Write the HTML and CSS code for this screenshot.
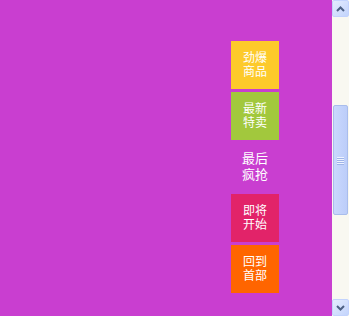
FILE: index.html
```html
<!DOCTYPE html>
<html lang="zh-CN">
<head>
<meta charset="utf-8">
<title>侧边栏</title>
<link rel="stylesheet" href="styles.css">
</head>
<body>
<div class="page">
  <main class="content">
    <nav class="sidebar">
      <a class="tile tile-hot" href="#">劲爆<br>商品</a>
      <a class="tile tile-new" href="#">最新<br>特卖</a>
      <a class="tile tile-last" href="#">最后<br>疯抢</a>
      <a class="tile tile-soon" href="#">即将<br>开始</a>
      <a class="tile tile-top" href="#">回到<br>首部</a>
    </nav>
  </main>
  <div class="scrollbar">
    <div class="sb-btn">
      <svg width="9" height="6" viewBox="0 0 9 6"><path d="M1 5 L4.5 1.5 L8 5" fill="none" stroke="#4d6185" stroke-width="2"/></svg>
    </div>
    <div class="sb-track">
      <div class="sb-gap-top"></div>
      <div class="sb-thumb">
        <span class="grip"></span><span class="grip"></span><span class="grip"></span><span class="grip"></span>
      </div>
      <div class="sb-gap-bottom"></div>
    </div>
    <div class="sb-btn">
      <svg width="9" height="6" viewBox="0 0 9 6"><path d="M1 1 L4.5 4.5 L8 1" fill="none" stroke="#4d6185" stroke-width="2"/></svg>
    </div>
  </div>
</div>
</body>
</html>
```

FILE: styles.css
```css
html, body {
  margin: 0;
  padding: 0;
  height: 100%;
}
body {
  font-family: "Liberation Sans", "Noto Sans CJK SC", sans-serif;
  background: #c93ed0;
}
.page {
  display: flex;
  height: 316px;
  overflow: hidden;
}
.content {
  flex: 1;
  background: #c93ed0;
}
.sidebar {
  display: flex;
  flex-direction: column;
  gap: 3px;
  width: 48px;
  margin-left: 231px;
  margin-top: 41px;
}
.tile {
  display: flex;
  align-items: center;
  justify-content: center;
  text-align: center;
  width: 48px;
  height: 48px;
  color: #fff;
  text-decoration: none;
  font-size: 12px;
  line-height: 14px;
}
.tile-hot { background: #fdca2b; }
.tile-new { background: #a2c83d; }
.tile-last { background: transparent; font-size: 13px; line-height: 16px; }
.tile-soon { background: #e22369; }
.tile-top { background: #ff6500; }

.scrollbar {
  width: 17px;
  display: flex;
  flex-direction: column;
  background: #f9f8f1;
}
.sb-btn {
  height: 17px;
  box-sizing: border-box;
  border: 1px solid #c3d3fd;
  border-radius: 2px;
  background: linear-gradient(135deg, #e4ecfe, #c3d4fc);
  display: flex;
  align-items: center;
  justify-content: center;
}
.sb-track {
  flex: 1;
  display: flex;
  flex-direction: column;
  background: #f9f8f1;
}
.sb-gap-top { height: 88px; }
.sb-thumb {
  height: 110px;
  margin: 0 1px;
  box-sizing: border-box;
  border: 1px solid #a9bdec;
  border-radius: 2px;
  background: linear-gradient(90deg, #c9d8fd, #bccdf9);
  display: flex;
  flex-direction: column;
  align-items: center;
  justify-content: center;
  gap: 1px;
}
.grip {
  display: block;
  width: 7px;
  height: 1px;
  background: #eef3ff;
  box-shadow: 0 1px 0 #9fb4e8;
}
.sb-gap-bottom { flex: 1; }
```
